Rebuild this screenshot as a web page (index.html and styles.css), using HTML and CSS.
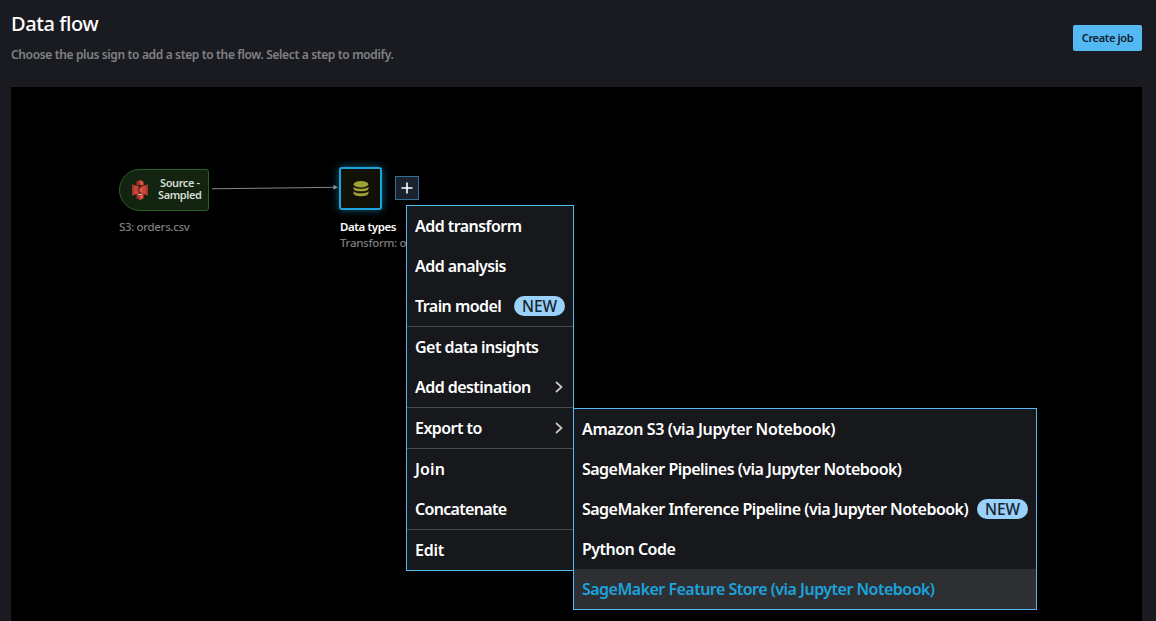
FILE: index.html
```html
<!DOCTYPE html>
<html lang="en">
<head>
<meta charset="utf-8">
<title>Data flow</title>
<link rel="stylesheet" href="styles.css">
</head>
<body>
<header class="header">
  <div>
    <h1 class="title">Data flow</h1>
    <p class="subtitle">Choose the plus sign to add a step to the flow. Select a step to modify.</p>
  </div>
  <button class="create">Create job</button>
</header>
<main class="canvas">
  <svg class="edge" width="130" height="10" viewBox="0 0 130 10"><path d="M1 6.8 L124 5.3" stroke="#858585" fill="none"/><path d="M122.500 2.800 L127 5.300 L122.500 7.800Z" fill="#a0a0a0"/></svg>
  <section class="node node-source">
    <div class="source-box">
      <svg class="bucket" width="18" height="20" viewBox="0 0 18 20">
        <path d="M1 4 3 5V15L1 16Z" fill="#a6362d"/>
        <path d="M3 5 8 6.500V13.500L3 15Z" fill="#c94337"/>
        <path d="M17 4 15 5V15l2 1Z" fill="#a6362d"/>
        <path d="M15 5 10 6.500v7l5 1.500Z" fill="#c94337"/>
        <path d="M9 0 5.500 1.700V5.500L9 4.700Z" fill="#a6362d"/><path d="M9 0l3.500 1.700V5.500L9 4.700Z" fill="#e25444"/>
        <path d="M9 20l-3.500-1.700V14.500L9 15.300Z" fill="#a6362d"/><path d="M9 20l3.500-1.700V14.500L9 15.300Z" fill="#e25444"/>
        <path d="M5.500 5.500 9 4.700l3.500.8L9 6.400Z" fill="#5e1f18"/><path d="M5.500 14.500 9 13.600l3.500.9L9 15.300Z" fill="#ee9a90"/>
        <path d="M9 7.800 6.500 7.500v5L9 12.200Z" fill="#8c2f28"/><path d="M9 7.800 11.500 7.500v5L9 12.200Z" fill="#e25444"/>
      </svg>
      <div class="source-name"><div>Source -</div><div>Sampled</div></div>
    </div>
    <div class="caption">S3: orders.csv</div>
  </section>
  <section class="node node-types">
    <div class="types-box">
      <svg width="16" height="16" viewBox="0 0 16 16" fill="#a0a038">
        <ellipse cx="8" cy="3.300" rx="7.300" ry="3.200"/>
        <path d="M.5 5.800C2.500 8.500 13.500 8.500 15.500 5.800V7.500C15.500 11.300.5 11.300.5 7.500Z"/>
        <path d="M.5 10.200C2.500 12.900 13.500 12.900 15.500 10.200v1.700C15.500 16.300.5 16.300.5 11.900Z"/>
      </svg>
    </div>
    <div class="caption caption-name">Data types</div>
    <div class="caption caption-detail">Transform: orders.csv</div>
  </section>
  <button class="plus" aria-label="Add step"><svg width="12" height="12" viewBox="0 0 12 12"><path d="M6 .5v11M.5 6h11" stroke="#fff" stroke-width="1.600"/></svg></button>
  <nav class="menu menu-main">
    <div class="item"><span>Add transform</span></div>
    <div class="item"><span>Add analysis</span></div>
    <div class="item"><span>Train model</span><b class="badge">NEW</b></div>
    <div class="item divided"><span>Get data insights</span></div>
    <div class="item"><span>Add destination</span><svg class="chevron" width="8" height="12" viewBox="0 0 8 12"><path d="M1 1 6.500 6 1 11"/></svg></div>
    <div class="item divided"><span>Export to</span><svg class="chevron" width="8" height="12" viewBox="0 0 8 12"><path d="M1 1 6.500 6 1 11"/></svg></div>
    <div class="item divided"><span class="join">Join</span></div>
    <div class="item"><span class="concat">Concatenate</span></div>
    <div class="item divided"><span class="edit">Edit</span></div>
  </nav>
  <nav class="menu menu-export">
    <div class="item"><span class="s3">Amazon S3 (via Jupyter Notebook)</span></div>
    <div class="item"><span>SageMaker Pipelines (via Jupyter Notebook)</span></div>
    <div class="item"><span>SageMaker Inference Pipeline (via Jupyter Notebook)</span><b class="badge">NEW</b></div>
    <div class="item"><span>Python Code</span></div>
    <div class="item active"><span>SageMaker Feature Store (via Jupyter Notebook)</span></div>
  </nav>
</main>
</body>
</html>
```
FILE: styles.css
```css
* { box-sizing: border-box; }
body {
  margin: 0;
  height: 621px;
  overflow: hidden;
  display: flex;
  flex-direction: column;
  background: #1a1b20;
  color: #fff;
  font-family: "Noto Sans", "Open Sans", sans-serif;
  font-weight: 500;
}
button { font: inherit; padding: 0; }
.header {
  height: 87px;
  flex: none;
  display: flex;
  justify-content: space-between;
  padding: 10px 14px 0 11px;
  white-space: nowrap;
}
.title { margin: 0; font-size: 20px; line-height: 28px; font-weight: 500; letter-spacing: -0.4px; }
.subtitle { margin: 8px 0 0; font-size: 12px; line-height: 18px; font-weight: 600; color: #808184; letter-spacing: -0.355px; }
.create {
  width: 69px;
  height: 26px;
  margin-top: 15px;
  border: 0;
  border-radius: 2px;
  background: #54b9f3;
  color: #10202c;
  font-size: 11px;
  font-weight: 600;
  line-height: 26px;
  letter-spacing: -0.35px;
}
.canvas { position: relative; flex: 1; margin: 0 14px 0 11px; background: #000; }
.edge { position: absolute; left: 200px; top: 95px; }
.node { position: absolute; white-space: nowrap; }
.node-source { left: 108px; top: 82px; }
.node-types { left: 328px; top: 80px; }
.source-box {
  width: 90px;
  height: 42px;
  display: flex;
  align-items: center;
  padding-left: 11px;
  gap: 9px;
  border: 1px solid #286326;
  border-radius: 21px 3px 3px 21px;
  background: #12240f;
}
.source-name { color: #d5dcd4; font-size: 11px; line-height: 12px; text-align: center; letter-spacing: -0.4px; font-weight: 600; padding-bottom: 2px; }
.caption { margin-top: 8px; font-size: 11.500px; line-height: 16px; color: #7e7e7e; letter-spacing: -0.35px; }
.types-box {
  width: 43px;
  height: 43px;
  display: grid;
  place-items: center;
  border: 2px solid #1ba3dc;
  border-radius: 3px;
  background: #111105;
  box-shadow: 0 0 9px #135d7c;
}
.caption-name { margin: 9px 0 0 1px; color: #fff; font-weight: 600; letter-spacing: -0.4px; }
.caption-detail { margin: 0 0 0 1px; letter-spacing: -0.3px; }
.plus {
  position: absolute;
  left: 384px;
  top: 89px;
  width: 24px;
  height: 24px;
  display: grid;
  place-items: center;
  border: 1px solid #376f98;
  background: #1b222d;
}
.menu { position: absolute; border: 1px solid #54b9f3; background: #17181c; font-size: 16px; font-weight: 600; white-space: nowrap; }
.menu-main { left: 395px; top: 118px; width: 168px; }
.menu-export { left: 562px; top: 321px; width: 464px; }
.item { height: 40px; display: flex; align-items: center; justify-content: space-between; padding: 0 8px; letter-spacing: -0.55px; }
.menu-export .item { letter-spacing: -0.52px; }
.divided { height: 41px; border-top: 1px solid #484a4c; }
.join { letter-spacing: 0.1px; }
.edit { letter-spacing: -0.2px; }
.concat { letter-spacing: -0.68px; }
.s3 { letter-spacing: -0.37px; }
.badge {
  width: 51px;
  height: 20px;
  border-radius: 10px;
  background: #99d1f8;
  color: #17232d;
  text-align: center;
  font-size: 15.500px;
  line-height: 20px;
  font-weight: 500;
  letter-spacing: -0.1px;
}
.chevron { margin-right: 2px; fill: none; stroke: #c8c9ca; stroke-width: 1.700; }
.active { background: #2e2f33; color: #1ba3dc; }
```
